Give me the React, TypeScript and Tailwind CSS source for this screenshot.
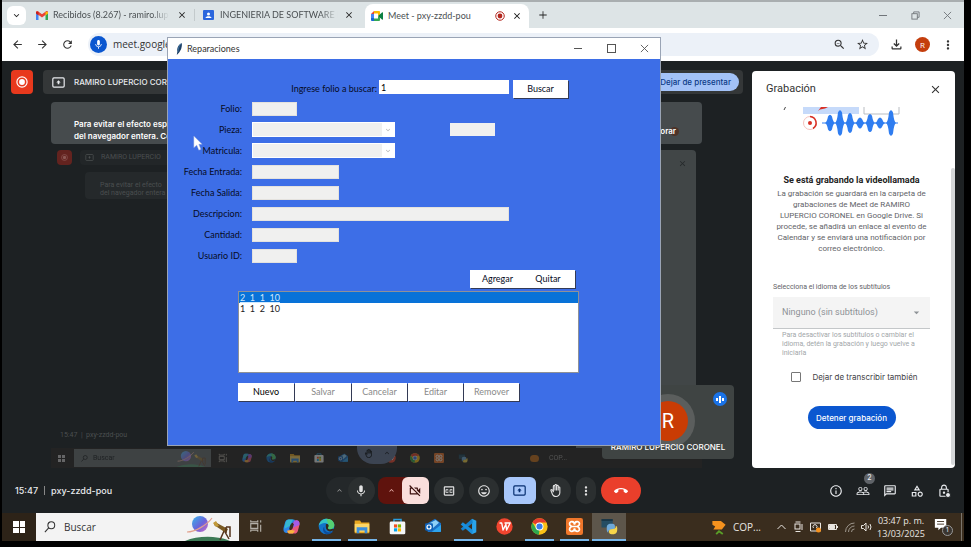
import React from "react";
import {
  MdArrowBack,
  MdArrowForward,
  MdRefresh,
  MdMic,
  MdOutlineVideocamOff,
  MdOutlineClosedCaption,
  MdOutlineMood,
  MdOutlineBackHand,
  MdMoreVert,
  MdCallEnd,
  MdOutlineInfo,
  MdPeopleOutline,
  MdOutlineChat,
  MdOutlineCategory,
  MdLockOutline,
  MdOutlineZoomOut,
  MdStarBorder,
  MdOutlineFileDownload,
  MdExpandMore,
  MdExpandLess,
  MdClose,
  MdArrowDropDown,
} from "react-icons/md";

const ui = "font-['Open_Sans','Noto_Sans',sans-serif]";
const compact = "font-[Lato,'Open_Sans',sans-serif]";
const meet = "font-[Roboto,'Open_Sans',sans-serif]";
const meetUi = "font-[Inter,Roboto,sans-serif]";

/* ---------- small drawings ---------- */

function GmailIcon() {
  return (
    <svg viewBox="0 0 24 18" className="w-[12px] h-[9px] shrink-0">
      <path d="M0 2v16h5V8z" fill="#4285f4" />
      <path d="M24 2v16h-5V8z" fill="#34a853" />
      <path d="M0 2.500C0 .5 2.500-.8 4.500 1L12 6.500 19.500 1C21.500-.8 24 .5 24 2.500V4L12 13 0 4z" fill="#ea4335" />
      <path d="M19 1.500 24 2v3l-5 4z" fill="#fbbc04" />
      <path d="M5 1.500 0 2v3l5 4z" fill="#c5221f" />
    </svg>
  );
}

function ContactsIcon() {
  return (
    <svg viewBox="0 0 22 20" className="w-[11px] h-[10px] shrink-0">
      <rect width="22" height="20" rx="2" fill="#2a66dd" />
      <circle cx="11" cy="8" r="3" fill="#fff" />
      <path d="M5 16c0-5 12-5 12 0z" fill="#fff" />
    </svg>
  );
}

function MeetIcon() {
  return (
    <svg viewBox="0 0 24 20" className="w-[12px] h-[10px] shrink-0">
      <path d="M0 6 6 0v6z" fill="#ea4335" />
      <path d="M6 0h10c1.500 0 2 1 2 2v5l-4 3V5H6z" fill="#fbbc04" />
      <path d="M0 6h6v8H0z" fill="#4285f4" />
      <path d="M0 14h6v6H2c-1 0-2-1-2-2z" fill="#1967d2" />
      <path d="M6 15h8v-5l4 3v5c0 1-1 2-2 2H6z" fill="#34a853" />
      <path d="m14 10 8-7c1-.8 2-.3 2 1v12c0 1.300-1 1.800-2 1z" fill="#0b8043" />
    </svg>
  );
}

function RecordIcon({ className, ring, dot }: { className: string; ring: string; dot: string }) {
  return (
    <svg viewBox="0 0 20 20" className={className}>
      <circle cx="10" cy="10" r="8.500" fill="none" stroke={ring} strokeWidth="2" />
      <circle cx="10" cy="10" r="4.800" fill={dot} />
    </svg>
  );
}

function PresentIcon({ className }: { className: string }) {
  return (
    <svg viewBox="0 0 24 20" className={className} fill="none" stroke="currentColor" strokeWidth="2.200">
      <rect x="1.500" y="1.500" width="21" height="17" rx="2" />
      <path d="m12 6 4 4h-2.500v3h-3v-3H8z" fill="currentColor" stroke="none" />
    </svg>
  );
}

function FeatherIcon() {
  return (
    <svg viewBox="0 0 12 22" className="w-[7px] h-[12px]">
      <path d="M10 0C4 3 1 9 2 16l-1 6c3-3 6-6 8-11 1-4 2-7 1-11z" fill="#1c3f66" />
      <path d="M9 1C5 5 4 9 3 16" stroke="#5f9ed1" fill="none" />
    </svg>
  );
}

const peaks = [
  { x: 50, h: 8 },
  { x: 60, h: 13 },
  { x: 70, h: 10 },
  { x: 80, h: 5 },
  { x: 90, h: 9 },
  { x: 100, h: 5 },
  { x: 111, h: 13 },
];

function Waveform() {
  return (
    <svg viewBox="0 0 120 32" className="mr-6 w-[120px] h-[32px]">
      <rect x="23" y="0" width="56" height="7" fill="#c6dafa" />
      <path d="M38 4 41 0h7l-3 1.500-5 1z" fill="#d93025" />
      <path d="M84 0v7h35V0" fill="none" stroke="#b9bdc2" />
      <path d="m4 3 1.500-3" stroke="#444" fill="none" />
      <circle cx="30" cy="16" r="6.500" fill="#fff" stroke="#f5c3be" strokeWidth="1" />
      <path d="M30 9.500a6.500 6.500 0 0 1 3 12" fill="none" stroke="#d93025" strokeWidth="1.500" />
      <circle cx="30" cy="16" r="2" fill="#d93025" />
      <path d="M42 16h76" stroke="#2f7df0" />
      {peaks.map(({ x, h }) => (
        <path
          key={x}
          d={`M${x - 5} 16Q${x - 3} 15 ${x - 2} ${16 - h * 0.8}Q${x} ${14 - h} ${x + 2} ${16 - h * 0.8}Q${x + 3} 15 ${x + 5} 16Q${x + 3} 17 ${x + 2} ${16 + h * 0.8}Q${x} ${18 + h} ${x - 2} ${16 + h * 0.8}Q${x - 3} 17 ${x - 5} 16z`}
          fill="#2f7df0"
        />
      ))}
    </svg>
  );
}

function SearchArt({ className }: { className: string }) {
  return (
    <svg viewBox="0 0 56 28" className={className}>
      <defs>
        <linearGradient id="planet" x1="0" y1="0" x2="1" y2="1">
          <stop offset="0" stopColor="#37b5ea" />
          <stop offset=".55" stopColor="#6b62d9" />
          <stop offset="1" stopColor="#d36fc4" />
        </linearGradient>
      </defs>
      <path d="M2 28Q14 23 30 24q12 1 17 4z" fill="#3c7a55" />
      <circle cx="17" cy="11" r="8" fill="url(#planet)" />
      <path d="M4 19C12 19 24 12 29 5" stroke="#e2a08d" strokeWidth="1.200" fill="none" />
      <path d="m32 9 13 7-2 4-12-8z" fill="#7a5a22" />
      <path d="m30 10 3-2 3 5-3 1z" fill="#c19a3b" />
      <path d="m41 18-4 9m5-8 4 7m-3-6V14m0 0h4v10" stroke="#54341c" strokeWidth="1.500" fill="none" />
    </svg>
  );
}

function TaskViewIcon() {
  return (
    <svg viewBox="0 0 24 24" className="w-[14px] h-[14px]" fill="none" stroke="#b3aea6" strokeWidth="2">
      <path d="M3 2v3h12V2M3 22v-3h12v3M3 8h12v8H3zM20 2v4M20 10v12" />
    </svg>
  );
}

function CopilotIcon() {
  return (
    <svg viewBox="0 0 24 24" className="w-[17px] h-[17px]">
      <path d="M8 2h7c2 0 2.500 2 3 4l-6 1-3 11c-.5 2-2 3-4 3-4 0-5-4-4-8l2-7c.7-2.500 2-4 5-4z" fill="#2c86e8" />
      <path d="M8 2h6l-4 9-8 4 1-6c.7-4 2-7 5-7z" fill="#35b9d0" />
      <path d="M16 22H9c-2 0-2.500-2-3-4l6-1 3-11c.5-2 2-3 4-3 4 0 5 4 4 8l-2 7c-.7 2.500-2 4-5 4z" fill="#e9597b" />
      <path d="M15 6c.5-2 2-3 4-3 4 0 5 4 4 7l-10 4z" fill="#a55be6" />
      <path d="M9 22c-2 0-2.500-2-3-4l6-1 5 1-3 4z" fill="#f8b53c" />
      <path d="m10.500 9 5-1-2 7-5 1z" fill="#3b2f20" />
    </svg>
  );
}

function EdgeIcon() {
  return (
    <svg viewBox="0 0 24 24" className="w-[17px] h-[17px]">
      <circle cx="12" cy="12" r="11" fill="#1273c9" />
      <path d="M1 11C2 4 7 1 12 1c6 0 11 4 11 9 0 4-3 6-6 6-2 0-3-1-3-2s1-1 1-3c0-2-2-4-5-4-4 0-8 2-9 4z" fill="#35c2c6" />
      <path d="M12 1c6 0 11 4 11 9 0 4-3 6-6 6-2 0-3-1-3-2s1-1 1-3z" fill="#54cf72" />
      <path d="M9 12c-1 6 4 9 9 8 2 0 3-1 4-2-2 4-6 5-10 5-4-1-7-8-3-11z" fill="#0c4d9c" />
      <path d="M11 9c2-1 4 0 4 2s-1 2-1 3c0 2 3 3 6 1l3 1c-3 4-9 4-11 0-1-2-1-4-1-7z" fill="#33281b" />
    </svg>
  );
}

function ExplorerIcon() {
  return (
    <svg viewBox="0 0 24 22" className="w-[16px] h-[15px]">
      <path d="M1 2h8l2 3h12v16H1z" fill="#e9a820" />
      <path d="M1 7h22v12H1z" fill="#fcd668" />
      <path d="M4 12h16v9h-4v-4H8v4H4z" fill="#3a8fdd" />
    </svg>
  );
}

function StoreIcon() {
  return (
    <svg viewBox="0 0 24 24" className="w-[17px] h-[17px]">
      <path d="M7 6V2h10v4" fill="none" stroke="#2a9fe0" strokeWidth="2" />
      <rect x="1" y="5" width="22" height="18" rx="2" fill="#f4f6f7" />
      <path d="M7 9h4.500v4.500H7z" fill="#f25022" />
      <path d="M12.500 9H17v4.500h-4.500z" fill="#7fba00" />
      <path d="M7 14.500h4.500V19H7z" fill="#00a4ef" />
      <path d="M12.500 14.500H17V19h-4.500z" fill="#ffb900" />
    </svg>
  );
}

function OutlookIcon() {
  return (
    <svg viewBox="0 0 26 24" className="w-[18px] h-[16px]">
      <path d="M5 8 16 1l9 7v13H5z" fill="#1a6fc4" />
      <path d="m8 8 9-5 5 4-9 8z" fill="#8fd1f7" />
      <path d="m25 10-14 11h12c1 0 2-1 2-2z" fill="#2ea3ec" />
      <rect x="1" y="8" width="12" height="11" rx="2" fill="#0f62b8" />
      <circle cx="7" cy="13.500" r="3" fill="none" stroke="#fff" strokeWidth="1.800" />
    </svg>
  );
}

function VsCodeIcon() {
  return (
    <svg viewBox="0 0 24 24" className="w-[17px] h-[17px]">
      <path d="m17 1 6 3v16l-6 3z" fill="#2aa5ec" />
      <path d="M17 1 1 15l3 3L18 7z" fill="#1583d0" />
      <path d="M17 23 1 9l3-3 14 11z" fill="#1a8fdc" />
    </svg>
  );
}

function WpsIcon() {
  return (
    <svg viewBox="0 0 24 24" className="w-[17px] h-[17px]">
      <circle cx="12" cy="12" r="11.500" fill="#f2452f" />
      <path d="M5 7h3l2 10 4-8 1 8 5-10h-8" fill="none" stroke="#fff" strokeWidth="1.900" strokeLinejoin="round" />
    </svg>
  );
}

function ChromeIcon() {
  return (
    <svg viewBox="0 0 24 24" className="w-[17px] h-[17px]">
      <circle cx="12" cy="12" r="11.500" fill="#fbc116" />
      <path d="M12 12 2 6.200A11.500 11.500 0 0 1 22 6.500H12z" fill="#e33b2e" />
      <path d="M2 6.200 7.200 15 12 17.500l-1 6A11.500 11.500 0 0 1 2 6.200z" fill="#2da94f" />
      <circle cx="12" cy="12" r="5.600" fill="#fff" />
      <circle cx="12" cy="12" r="4.300" fill="#3b7de8" />
    </svg>
  );
}

function XamppIcon() {
  return (
    <svg viewBox="0 0 24 24" className="w-[17px] h-[17px]">
      <rect width="24" height="24" rx="3" fill="#f0772b" />
      <path
        d="M12 9.500C12 4 5 4 5 8c0 3 2 3 3 4-1 1-3 1-3 4 0 4 7 4 7-1.500C12 20 19 20 19 16c0-3-2-3-3-4 1-1 3-1 3-4 0-4-7-4-7 1.500zM8 12h8"
        fill="none"
        stroke="#fff"
        strokeWidth="2.400"
      />
    </svg>
  );
}

function PythonIcon() {
  return (
    <svg viewBox="0 0 24 24" className="w-[18px] h-[18px]">
      <path d="M2 3h15v11H2z" fill="#254d63" />
      <path d="M2 3h15v2H2z" fill="#16303f" />
      <path d="M9 15c0-4 1-6 6-6s5 2 5 5-2 3-5 3-4 1-4 4c-2-1-2-3-2-6z" fill="#6fa9d8" />
      <path d="M23 16c0 4-1 7-6 7s-5-2-5-4 2-3 5-3 4-1 4-4c2 0 2 2 2 4z" fill="#f7d54a" />
    </svg>
  );
}

/* ---------- browser chrome ---------- */

function TabBar() {
  return (
    <div className={`flex h-7 items-center border-t-2 border-[#a9aeb0] bg-[#dde4e6] text-[9px] text-[#4a4f52] ${compact}`}>
      <button aria-label="Buscar pestañas" className="ml-[5px] flex h-[19px] w-[19px] items-center justify-center rounded-md bg-white text-[#222]">
        <MdExpandMore size={11} />
      </button>
      <div className="ml-[10px] flex w-[167px] items-center">
        <GmailIcon />
        <span className="ml-[5px] w-[116px] overflow-hidden whitespace-nowrap [mask-image:linear-gradient(to_right,#000_85%,transparent)]">
          Recibidos (8.267) - ramiro.lupercio
        </span>
        <button aria-label="Cerrar" className="ml-[8px] text-[#222]"><MdClose size={10} /></button>
        <span className="ml-auto mr-2 h-3 w-px bg-[#c3cacc]" />
      </div>
      <div className="flex w-[162px] items-center">
        <ContactsIcon />
        <span className="ml-[6px] w-[118px] overflow-hidden whitespace-nowrap [mask-image:linear-gradient(to_right,#000_85%,transparent)]">
          INGENIERIA DE SOFTWARE M-2025
        </span>
        <button aria-label="Cerrar" className="ml-[6px] text-[#222]"><MdClose size={10} /></button>
      </div>
      <div className="mt-[2px] flex h-6 w-[164px] items-center rounded-t-lg bg-white pl-[6px]">
        <MeetIcon />
        <span className="ml-[5px] grow whitespace-nowrap">Meet - pxy-zzdd-pou</span>
        <RecordIcon className="mr-[7px] h-[10px] w-[10px]" ring="#b3261e" dot="#b3261e" />
        <button aria-label="Cerrar" className="mr-[7px] text-[#111]"><MdClose size={10} /></button>
      </div>
      <button aria-label="Nueva pestaña" className="ml-[9px] rotate-45 text-[#222]"><MdClose size={10} /></button>
      <div className="ml-auto flex items-center gap-[23px] pr-[12px] text-[#70757a]">
        <button aria-label="Minimizar" className="flex h-[9px] w-[9px] items-center"><span className="h-px w-[8px] bg-current" /></button>
        <button aria-label="Restaurar" className="flex">
          <svg viewBox="0 0 10 10" className="h-[9px] w-[9px]" fill="none" stroke="currentColor"><rect x="1" y="3" width="6" height="6" /><path d="M3 3V1h6v6H7" /></svg>
        </button>
        <button aria-label="Cerrar ventana" className="flex">
          <svg viewBox="0 0 10 10" className="h-[9px] w-[9px]" fill="none" stroke="currentColor"><path d="m1 1 8 8M9 1 1 9" /></svg>
        </button>
      </div>
    </div>
  );
}

function Toolbar() {
  return (
    <div className={`flex h-[33px] items-center bg-white pl-[9px] text-[#333] ${ui}`}>
      <button aria-label="Atrás" className="mr-[12px]"><MdArrowBack size={13} /></button>
      <button aria-label="Adelante" className="mr-[12px]"><MdArrowForward size={13} /></button>
      <button aria-label="Recargar" className="mr-[14px]"><MdRefresh size={13} /></button>
      <div className="flex h-[23px] grow items-center rounded-full bg-[#ecf1f8] pl-[2px] pr-[10px]">
        <span className="flex h-[17px] w-[17px] items-center justify-center rounded-full bg-[#0b57d0] text-white"><MdMic size={11} /></span>
        <span className="ml-[6px] text-[10px] text-[#333]">meet.google.com</span>
        <span className="ml-auto flex items-center gap-[10px]"><MdOutlineZoomOut size={13} /><MdStarBorder size={13} /></span>
      </div>
      <div className="flex items-center gap-[11px] pl-[10px] pr-[9px]">
        <MdOutlineFileDownload size={15} />
        <span className="flex h-[15px] w-[15px] items-center justify-center rounded-full bg-[#c43e0d] text-[8px] text-white">R</span>
        <MdMoreVert size={14} />
      </div>
    </div>
  );
}

/* ---------- meet ---------- */

function PresenterBar() {
  return (
    <div className={`flex h-6 gap-[10px] text-[8px] font-medium ${meetUi}`}>
      <span className="flex h-6 w-[22px] items-center justify-center rounded bg-[#e8391d]">
        <RecordIcon className="h-[12px] w-[12px]" ring="#fff" dot="#fff" />
      </span>
      <div className="flex grow items-center justify-between rounded bg-[#343738] pl-[9px] pr-1">
        <span className="flex items-center gap-[9px] text-[#e8eaed]">
          <PresentIcon className="h-[11px] w-[13px]" />
          RAMIRO LUPERCIO CORONEL (Tú, presentando)
        </span>
        <button className="flex h-[18px] items-center rounded-full bg-[#a3c2f7] px-[8px] text-[#0b3a86]">
          Dejar de presentar
        </button>
      </div>
    </div>
  );
}

function SharedScreen() {
  return (
    <div className="mt-2 ml-10 mr-[41px] flex grow flex-col overflow-hidden">
      <div className={`flex h-[42px] justify-between rounded bg-[#464b4d] px-[23px] pt-[16px] text-[8px] leading-[12px] font-semibold text-white ${meetUi}`}>
        <p className="whitespace-nowrap">
          Para evitar el efecto espejo infinito, no compartas toda la pantalla ni la ventana
          <br />
          del navegador entera. Comparte solo una pestaña.
        </p>
        <div className="flex items-center">
          <span className="z-[1]">Ignorar</span>
          <span className="-ml-[6px] h-[9px] w-[9px] rounded-full bg-[#4d3328]" />
        </div>
      </div>
      <div className="mt-[6px] flex grow justify-between pl-[6px] pr-[6px]">
        <div className="flex w-[140px] flex-col text-[7px] text-[#4b4f50]">
          <div className="flex items-center">
            <span className="flex h-[15px] w-[15px] items-center justify-center rounded-sm bg-[#63231f]">
              <RecordIcon className="h-[7px] w-[7px]" ring="#8c5854" dot="#8c5854" />
            </span>
            <span className="ml-2 flex grow items-center gap-[7px] rounded-sm bg-[#222628] py-[2px] pl-[5px] whitespace-nowrap">
              <PresentIcon className="h-[7px] w-[9px]" />
              RAMIRO LUPERCIO
            </span>
          </div>
          <p className="mt-[7px] ml-[28px] h-[27px] rounded-sm bg-[#25292b] pt-[9px] pl-[15px] leading-[8px] whitespace-nowrap">
            Para evitar el efecto
            <br />
            del navegador entera
          </p>
          <p className="mt-auto mb-[8px] pl-[3px]">15:47 &nbsp;|&nbsp; pxy-zzdd-pou</p>
        </div>
        <div className="flex w-[120px] justify-end rounded-t bg-[#414647] pt-[9px] pr-[9px]">
          <MdClose size={9} className="text-[#25292b]" />
        </div>
      </div>
      <div className="flex h-[20px] items-center bg-[#252423] pl-[7px] opacity-80">
        <span className="grid h-[7px] w-[7px] grid-cols-2 gap-px"><i className="bg-[#777]" /><i className="bg-[#777]" /><i className="bg-[#777]" /><i className="bg-[#777]" /></span>
        <div className="ml-[9px] flex h-[18px] w-[137px] items-center justify-between bg-[#474b4c] pl-[7px] text-[7px] text-[#1f2223]">
          <span className="flex items-center gap-[5px]">
            <svg viewBox="0 0 14 14" className="h-[7px] w-[7px]" fill="none" stroke="currentColor" strokeWidth="1.500"><circle cx="8.500" cy="5" r="4" /><path d="m5.500 8-4.500 5" /></svg>
            Buscar
          </span>
          <SearchArt className="h-[18px] w-[36px] opacity-50" />
        </div>
        <div className="ml-[5px] flex grow items-center gap-[10px] opacity-50 [&_svg]:h-[10px] [&_svg]:w-[14px]">
          <TaskViewIcon /><CopilotIcon /><EdgeIcon /><ExplorerIcon /><StoreIcon /><OutlookIcon /><VsCodeIcon /><WpsIcon /><ChromeIcon /><XamppIcon /><PythonIcon />
          <span className="ml-[50px] h-[7px] w-[9px] rounded-sm bg-[#c8701b]" />
          <span className="text-[7px] text-[#999]">COP...</span>
        </div>
      </div>
    </div>
  );
}

function SelfTile() {
  return (
    <div className="absolute right-[18px] bottom-[9px] flex h-[74px] w-[132px] flex-col items-center rounded bg-[#3f4443]">
      <span className="mt-[9px] flex h-[54px] w-[54px] items-center justify-center rounded-full bg-[#5b5e5d]">
        <span className="flex h-10 w-10 items-center justify-center rounded-full bg-[#c93c04] text-[20px] text-white">R</span>
      </span>
      <span className={`-mt-[7px] text-[8px] leading-[12px] font-medium whitespace-nowrap text-white ${meetUi}`}>RAMIRO LUPERCIO CORONEL</span>
      <span className="absolute top-[7px] right-[7px] flex h-[14px] w-[14px] items-center justify-center gap-px rounded-full bg-[#1a73e8]">
        <i className="h-[3px] w-[2px] bg-white" /><i className="h-[7px] w-[2px] bg-white" /><i className="h-[3px] w-[2px] bg-white" />
      </span>
    </div>
  );
}

function RecordingPanel() {
  return (
    <aside className="mt-px mr-[9px] flex w-[203px] shrink-0 flex-col rounded bg-white">
      <header className="flex h-9 items-center justify-between pr-[13px] pl-[14px]">
        <h2 className="text-[11px] text-[#333]">Grabación</h2>
        <button aria-label="Cerrar panel" className="text-[#333]"><MdClose size={13} /></button>
      </header>
      <div className="flex grow">
        <div className="flex grow flex-col items-center">
          <Waveform />
          <h3 className="mt-[35px] text-[9px] leading-[12px] font-bold text-[#222]">Se está grabando la videollamada</h3>
          <p className="mt-[2px] text-center text-[8px] leading-[11px] whitespace-nowrap text-[#5f6368]">
            La grabación se guardará en la carpeta de
            <br />
            grabaciones de Meet de RAMIRO
            <br />
            LUPERCIO CORONEL en Google Drive. Si
            <br />
            procede, se añadirá un enlace al evento de
            <br />
            Calendar y se enviará una notificación por
            <br />
            correo electrónico.
          </p>
          <div className="mt-[28px] flex w-[157px] flex-col">
            <label htmlFor="caption-language" className="text-[7px] leading-[10px] whitespace-nowrap text-[#5f6368]">
              Selecciona el idioma de los subtítulos
            </label>
            <div className="mt-[5px] flex h-8 items-center border-b border-[#c4c7c9] bg-[#f4f4f4] pr-[7px] pl-[9px] text-[#8d9296]">
              <select id="caption-language" disabled className="grow appearance-none text-[9px] opacity-100">
                <option>Ninguno (sin subtítulos)</option>
              </select>
              <MdArrowDropDown size={13} />
            </div>
            <p className="mt-[2px] pl-[9px] text-[7px] leading-[9px] whitespace-nowrap text-[#a2a6a9]">
              Para desactivar los subtítulos o cambiar el
              <br />
              idioma, detén la grabación y luego vuelve a
              <br />
              iniciarla
            </p>
          </div>
          <label className={`mt-[13px] flex items-center gap-[11px] pl-[6px] text-[8px] leading-[12px] text-[#3f4245] ${meetUi}`}>
            <input type="checkbox" className="h-[10px] w-[10px] appearance-none rounded-[1px] border border-[#777]" />
            Dejar de transcribir también
          </label>
          <button className={`mt-[23px] h-[23px] w-[88px] rounded-full bg-[#0b57d0] text-[8px] font-medium text-white ${meetUi}`}>
            Detener grabación
          </button>
        </div>
        <div className="mt-[61px] mb-[3px] w-1 rounded-full bg-[#d5d7d9]" />
      </div>
    </aside>
  );
}

const round = "flex h-[27px] items-center justify-center rounded-full bg-[#2b2f30] text-[#e3e3e3]";

function ControlBar() {
  return (
    <div className={`flex h-[45px] items-center text-[9px] font-medium text-[#e8eaed] ${meetUi}`}>
      <div className="flex flex-1 items-center gap-[6px] pl-[13px]">
        <span>15:47</span>
        <span className="h-[9px] w-px bg-[#888]" />
        <span>pxy-zzdd-pou</span>
      </div>
      <div className="flex items-center gap-[5px]">
        <div className="flex w-[49px] items-center justify-end gap-[4px] rounded-full bg-[#24282a]">
          <button aria-label="Opciones de audio" className="text-[#999]"><MdExpandLess size={9} /></button>
          <button aria-label="Micrófono" className={`${round} w-[27px]`}><MdMic size={14} /></button>
        </div>
        <div className="-ml-[2px] flex w-[51px] items-center justify-end gap-[6px] rounded-lg bg-[#5f130d]">
          <button aria-label="Opciones de vídeo" className="text-[#f0b8b3]"><MdExpandLess size={9} /></button>
          <button aria-label="Cámara" className="flex h-[27px] w-[27px] items-center justify-center rounded-md bg-[#f9dedc] text-[#3b0f0c]"><MdOutlineVideocamOff size={14} /></button>
        </div>
        <button aria-label="Subtítulos" className={`${round} w-[30px]`}><MdOutlineClosedCaption size={14} /></button>
        <button aria-label="Reacciones" className={`${round} w-[30px]`}><MdOutlineMood size={14} /></button>
        <button aria-label="Presentar" className="flex h-[27px] w-8 items-center justify-center rounded-md bg-[#a8c7fa] text-[#062e6f]"><PresentIcon className="h-[11px] w-[13px]" /></button>
        <button aria-label="Levantar la mano" className={`${round} w-[30px]`}><MdOutlineBackHand size={13} /></button>
        <button aria-label="Más opciones" className={`${round} w-5`}><MdMoreVert size={14} /></button>
        <button aria-label="Salir" className="flex h-[27px] w-10 items-center justify-center rounded-full bg-[#ea3f2b] text-white"><MdCallEnd size={14} /></button>
      </div>
      <div className="flex flex-1 items-center justify-end gap-[13px] pr-[13px]">
        <button aria-label="Detalles"><MdOutlineInfo size={14} /></button>
        <button aria-label="Participantes" className="relative">
          <MdPeopleOutline size={14} />
          <span className="absolute -top-[11px] left-[8px] flex h-[11px] w-[11px] items-center justify-center rounded-full bg-[#5f6368] text-[7px]">2</span>
        </button>
        <button aria-label="Chat"><MdOutlineChat size={14} /></button>
        <button aria-label="Actividades"><MdOutlineCategory size={14} /></button>
        <button aria-label="Controles" className="relative">
          <MdLockOutline size={14} />
          <span className="absolute right-0 bottom-0 h-[6px] w-[6px] rounded-full border border-[#1d2123] bg-[#e8eaed]" />
        </button>
      </div>
    </div>
  );
}

/* ---------- repairs window ---------- */

type Field = { id: string; label: string; kind: "text" | "combo"; width: string; extra?: boolean };

const fields: Field[] = [
  { id: "folio", label: "Folio:", kind: "text", width: "w-[45px]" },
  { id: "pieza", label: "Pieza:", kind: "combo", width: "w-[143px]", extra: true },
  { id: "matricula", label: "Matricula:", kind: "combo", width: "w-[143px]" },
  { id: "entrada", label: "Fecha Entrada:", kind: "text", width: "w-[87px]" },
  { id: "salida", label: "Fecha Salida:", kind: "text", width: "w-[87px]" },
  { id: "descripcion", label: "Descripcion:", kind: "text", width: "w-[257px]" },
  { id: "cantidad", label: "Cantidad:", kind: "text", width: "w-[87px]" },
  { id: "usuario", label: "Usuario ID:", kind: "text", width: "w-[45px]" },
];

const raised = "h-[18px] bg-white text-[9px] leading-[12px] shadow-[1px_1px_0_#333a55]";

function RepairsWindow() {
  return (
    <section className={`absolute top-[37px] left-[165px] z-10 flex h-[409px] w-[494px] flex-col border border-[#9aa4b5] bg-[#3d6ee7] text-[9px] text-[#060b24] ${compact}`}>
      <header className="flex h-[21px] shrink-0 items-center bg-white pl-[8px] text-[#333]">
        <FeatherIcon />
        <h1 className="ml-[4px]">Reparaciones</h1>
        <div className="ml-auto flex items-center gap-6 pr-[11px] text-[#555]">
          <button aria-label="Minimizar" className="flex h-[9px] w-[9px] items-center"><span className="h-px w-[8px] bg-current" /></button>
          <button aria-label="Maximizar" className="h-[9px] w-[9px] border border-current" />
          <button aria-label="Cerrar" className="flex">
            <svg viewBox="0 0 10 10" className="h-[9px] w-[9px]" fill="none" stroke="currentColor"><path d="m1 1 8 8M9 1 1 9" /></svg>
          </button>
        </div>
      </header>
      <form className="flex flex-col pt-[20px]" onSubmit={(e) => e.preventDefault()}>
        <div className="flex h-[19px] items-center">
          <label htmlFor="buscar" className="w-[209px] text-right">Ingrese folio a buscar:</label>
          <input id="buscar" defaultValue="1" className="mb-[3px] ml-[2px] h-[14px] w-[130px] bg-white px-[2px] text-black" />
          <button type="button" className={`${raised} ml-1 w-[55px]`}>Buscar</button>
        </div>
        {fields.map((f) => (
          <div key={f.id} className="flex h-[21px] items-center">
            <label htmlFor={f.id} className="w-[74px] text-right">{f.label}</label>
            {f.kind === "text" ? (
              <input id={f.id} disabled className={`${f.width} ml-[10px] h-[14px] border border-[#e4e2de] bg-[#f0f0ef]`} />
            ) : (
              <div className={`${f.width} ml-[10px] flex h-[15px] items-center border border-white bg-white`}>
                <select id={f.id} disabled className="h-full grow appearance-none bg-[#f0f0ef]"><option></option></select>
                <MdExpandMore size={8} className="mx-[2px] text-[#aaa]" />
              </div>
            )}
            {f.extra && <input aria-label="Nombre de la pieza" disabled className="ml-[55px] h-[13px] w-[45px] bg-[#f0f0ef]" />}
          </div>
        ))}
        <div className="mt-[4px] ml-[302px] flex">
          <button type="button" className={`${raised} w-[55px]`}>Agregar</button>
          <button type="button" className={`${raised} w-[50px] pr-1`}>Quitar</button>
        </div>
        <ul role="listbox" aria-label="Reparaciones" className="mt-[3px] ml-[70px] h-[82px] w-[341px] border border-[#8e9197] bg-white leading-[11px] text-[#222]">
          <li role="option" aria-selected="true" className="bg-[#0872d8] px-px whitespace-pre text-[#cfe8fd] underline">2  1  1  10</li>
          <li role="option" aria-selected="false" className="px-px whitespace-pre">1  1  2  10</li>
        </ul>
        <div className="mt-[10px] ml-[70px] flex gap-px">
          <button type="button" className={`${raised} w-[56px] text-black`}>Nuevo</button>
          <button type="button" disabled className={`${raised} w-[56px] text-[#8a8a8a]`}>Salvar</button>
          <button type="button" disabled className={`${raised} w-[55px] text-[#8a8a8a]`}>Cancelar</button>
          <button type="button" disabled className={`${raised} w-[55px] text-[#8a8a8a]`}>Editar</button>
          <button type="button" disabled className={`${raised} w-[55px] text-[#8a8a8a]`}>Remover</button>
        </div>
      </form>
    </section>
  );
}

/* ---------- taskbar ---------- */

const apps = [
  { name: "Vista de tareas", icon: <TaskViewIcon />, open: false },
  { name: "Copilot", icon: <CopilotIcon />, open: false },
  { name: "Edge", icon: <EdgeIcon />, open: true },
  { name: "Explorador", icon: <ExplorerIcon />, open: true },
  { name: "Tienda", icon: <StoreIcon />, open: false },
  { name: "Outlook", icon: <OutlookIcon />, open: false },
  { name: "Visual Studio Code", icon: <VsCodeIcon />, open: true },
  { name: "WPS", icon: <WpsIcon />, open: false },
  { name: "Chrome", icon: <ChromeIcon />, open: true },
  { name: "XAMPP", icon: <XamppIcon />, open: true },
];

function Taskbar() {
  return (
    <footer className={`flex h-7 items-stretch bg-[#3a2d1e] text-[#e9e6e1] ${ui}`}>
      <button aria-label="Inicio" className="flex w-[34px] items-center justify-center bg-[#2d2318]">
        <span className="grid h-[12px] w-[12px] grid-cols-2 gap-px"><i className="bg-white" /><i className="bg-white" /><i className="bg-white" /><i className="bg-white" /></span>
      </button>
      <label className="flex w-[203px] items-center bg-[#f3f3f3] pl-[8px] text-[#333]">
        <svg viewBox="0 0 14 14" className="h-[12px] w-[12px] shrink-0" fill="none" stroke="currentColor" strokeWidth="1.200"><circle cx="8.500" cy="5" r="4" /><path d="m5.500 8-4.500 5" /></svg>
        <input aria-label="Buscar" placeholder="Buscar" className="ml-[8px] w-0 grow text-[10px] placeholder:text-[#333]" />
        <SearchArt className="h-7 w-14 shrink-0" />
      </label>
      <div className="flex w-[353px] justify-between">
        {apps.map((a) => (
          <button key={a.name} aria-label={a.name} className="flex w-[34px] flex-col items-center">
            <span className="flex grow items-center">{a.icon}</span>
            <span className={a.open ? "h-[2px] w-[29px] bg-[#76b5e8]" : "h-[2px]"} />
          </button>
        ))}
      </div>
      <button aria-label="Python" className="flex w-[34px] flex-col items-center bg-[#5d564b]">
        <span className="flex grow items-center">
          <PythonIcon />
        </span>
        <span className="h-[2px] w-full bg-[#76b5e8]" />
      </button>
      <div className="ml-auto flex items-center">
        <svg viewBox="0 0 16 18" className="h-[17px] w-[16px]"><path d="M1 2h9l5 4-4 5H2l2-3-3-2z" fill="#f6921e" /><path d="m5 16 3-3 4 3" stroke="#5a9e28" strokeWidth="2" fill="none" /></svg>
        <span className="ml-[6px] w-[42px] text-[10px]">COP...</span>
        <div className="flex items-center gap-[4px]">
          <svg viewBox="0 0 12 12" className="h-[12px] w-[13px]" fill="none" stroke="currentColor"><path d="m2 8 4-4 4 4" /></svg>
          <svg viewBox="0 0 12 12" className="h-[12px] w-[13px]" fill="none" stroke="currentColor"><rect x="2.500" y="3" width="5" height="5" /><path d="M3 1h5M3 10.500h5M9.500 3v6" /></svg>
          <svg viewBox="0 0 12 12" className="h-[12px] w-[13px]" fill="none" stroke="currentColor"><path d="M1 2h10v8H1zM4 7a2 2 0 1 1 3 0" /><circle cx="9" cy="9" r="2.500" fill="#f6921e" stroke="none" /></svg>
          <svg viewBox="0 0 12 12" className="h-[12px] w-[13px]" fill="none" stroke="currentColor"><path d="M2 3.500h8v5H2zM11 5v2" /><path d="M3 4.500h5v3H3z" fill="currentColor" /></svg>
          <svg viewBox="0 0 12 12" className="h-[12px] w-[13px]" fill="none" stroke="#9d968c"><path d="M2 11a9 9 0 0 1 9-9M5 11a6 6 0 0 1 6-6M8 11a3 3 0 0 1 3-3" /></svg>
          <svg viewBox="0 0 12 12" className="h-[12px] w-[13px]" fill="none" stroke="currentColor"><path d="M1 4.500h2l2.500-2.500v8L3 7.500H1zM7.500 4.500q1 1.500 0 3M9.500 3q2 3 0 6" /></svg>
        </div>
        <div className="ml-[4px] flex w-[48px] flex-col items-center text-[9px] leading-[13px] whitespace-nowrap">
          <span>03:47 p. m.</span>
          <span>13/03/2025</span>
        </div>
        <span className="relative ml-[9px] flex h-[18px] w-[20px]">
          <svg viewBox="0 0 16 16" className="h-[14px] w-[14px]"><path d="M1 1h13v10H8l-3 3v-3H1z" fill="#fff" /><path d="M3.500 4h8M3.500 7h8" stroke="#3a2d1e" /></svg>
          <span className="absolute right-px bottom-0 flex h-[11px] w-[11px] items-center justify-center rounded-full border border-[#999] bg-[#3a3530] text-[7px] text-white">1</span>
        </span>
        <span className="mr-[2px] ml-[7px] h-7 w-px bg-[#7a746b]" />
      </div>
    </footer>
  );
}

export default function App() {
  return (
    <div className="flex h-screen flex-col bg-black pr-[7px] pb-[6px] pl-[2px]">
      <main className="relative flex min-h-0 grow flex-col bg-[#1d2123]">
        <TabBar />
        <Toolbar />
        <div className={`flex min-h-0 grow flex-col pt-[9px] ${meet}`}>
          <div className="flex min-h-0 grow">
            <div className="relative flex min-w-0 grow flex-col pr-[9px] pl-[9px]">
              <PresenterBar />
              <SharedScreen />
              <span className="absolute bottom-[4px] left-[355px] flex h-[22px] w-10 items-center justify-center gap-[10px] rounded-b-2xl bg-[#3c4452] text-[#15181b]">
                <MdOutlineBackHand size={9} />
                <MdExpandLess size={8} />
              </span>
              <SelfTile />
            </div>
            <RecordingPanel />
          </div>
          <ControlBar />
        </div>
        <RepairsWindow />
        <svg viewBox="0 0 12 18" className="absolute top-[136px] left-[191px] z-20 h-[15px] w-[10px]">
          <path d="M1 0v14l3.500-3 2.500 6 2.500-1-2.500-6H11z" fill="#fff" stroke="#8fa4d8" strokeWidth=".5" />
        </svg>
      </main>
      <Taskbar />
    </div>
  );
}
